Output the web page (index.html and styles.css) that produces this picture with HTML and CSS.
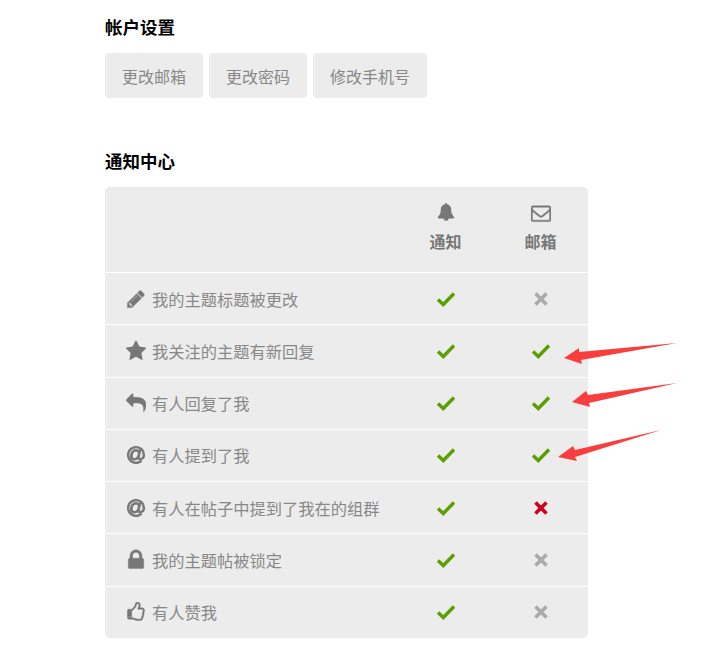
FILE: index.html
```html
<!DOCTYPE html>
<html lang="zh-CN">
<head>
    <meta charset="UTF-8">
    <title>设置</title>
    <link rel="stylesheet" href="styles.css">
</head>
<body>
<svg class="defs" xmlns="http://www.w3.org/2000/svg">
    <symbol id="i-check" viewBox="0 0 20 16"><path d="M2 8.5 7.3 13.5 18 2.5" fill="none" stroke="currentColor" stroke-width="3.4"/></symbol>
    <symbol id="i-times" viewBox="0 0 16 16"><path d="M2.5 2.5 13.5 13.5M13.5 2.5 2.5 13.5" fill="none" stroke="currentColor" stroke-width="3.6"/></symbol>
    <symbol id="i-at" viewBox="0 0 1792 1792"><path d="M1100 775q0-108-53.5-169t-147.5-61q-63 0-124 30.5t-110 84.5-79.5 137-30.5 180q0 112 53.5 173t150.5 61q96 0 176-66.5t122.5-166 42.5-203.5zm564 121q0 111-37 197t-98.5 135-131.5 74.5-145 27.5q-6 0-15.5.5t-16.5.5q-95 0-142-53-28-33-33-83-52 66-131.5 110t-173.5 44q-161 0-249.5-95.5t-88.5-269.5q0-157 66-290t179-210.5 246-77.5q87 0 155 35.5t106 99.5l2-19 11-56q1-6 5.5-12t9.5-6h118q5 0 13 11 5 5 3 16l-120 614q-5 24-5 48 0 39 12.5 52t44.5 13q28-1 57-5.5t73-24 77-50 57-89.5 24-137q0-292-174-466t-466-174q-130 0-248.5 51t-204 136.5-136.5 204-51 248.5 51 248.5 136.5 204 204 136.5 248.5 51q228 0 405-144 11-9 24-8t21 12l41 49q8 12 7 24-2 13-12 22-102 83-227.5 128t-258.5 45q-156 0-298-61t-245-164-164-245-61-298 61-298 164-245 245-164 298-61q344 0 556 212t212 556z"/></symbol>
</svg>

<div class="page">
    <h3 class="title">帐户设置</h3>
    <div class="btn-row">
        <button class="btn">更改邮箱</button>
        <button class="btn">更改密码</button>
        <button class="btn">修改手机号</button>
    </div>

    <h3 class="title title-notify">通知中心</h3>
    <div class="grid">
        <div class="row head">
            <div></div>
            <div class="col-head">
                <svg class="head-icon" viewBox="0 0 1792 1792"><path d="M912 1696q0-16-16-16-59 0-101.5-42.5t-42.5-101.5q0-16-16-16t-16 16q0 73 51.5 124.5t124.5 51.5q16 0 16-16zm816-288q0 52-38 90t-90 38h-448q0 106-75 181t-181 75-181-75-75-181h-448q-52 0-90-38t-38-90q50-42 91-88t85-119.5 74.5-158.5 50-206 19.5-260q0-152 117-282.5t307-158.5q-8-19-8-39 0-40 28-68t68-28 68 28 28 68q0 20-8 39 190 28 307 158.5t117 282.5q0 139 19.5 260t50 206 74.5 158.5 85 119.5 91 88z"/></svg>
                <span>通知</span>
            </div>
            <div class="col-head">
                <svg class="head-icon head-mail" viewBox="0 0 1792 1792"><path d="M1664 1504v-768q-32 36-69 66-268 206-426 338-51 43-83 67t-86.5 48.5-102.5 24.5h-2q-48 0-102.5-24.5t-86.5-48.5-83-67q-158-132-426-338-37-30-69-66v768q0 13 9.5 22.5t22.5 9.5h1472q13 0 22.5-9.5t9.5-22.5zm0-1051v-24.5l-.5-13-3-12.5-5.5-9-9-7.5-14-2.5h-1472q-13 0-22.5 9.5t-9.5 22.5q0 168 147 284 193 152 401 317 6 5 35 29.5t46 37.5 44.5 31.5 50.5 27.5 43 9h2q20 0 43-9t50.5-27.5 44.5-31.5 46-37.5 35-29.5q208-165 401-317 54-43 100.5-115.5t46.5-131.5zm128-37v1088q0 66-47 113t-113 47h-1472q-66 0-113-47t-47-113v-1088q0-66 47-113t113-47h1472q66 0 113 47t47 113z"/></svg>
                <span>邮箱</span>
            </div>
        </div>

        <div class="row">
            <div class="label">
                <svg class="icon icon-bold" viewBox="0 0 1792 1792"><path d="M491 1536l91-91-235-235-91 91v107h128v128h107zm523-928q0-22-22-22-10 0-17 7l-542 542q-7 7-7 17 0 22 22 22 10 0 17-7l542-542q7-7 7-17zm-54-192l416 416-832 832h-416v-416zm683 96q0 53-37 90l-166 166-416-416 166-165q36-38 90-38 53 0 91 38l235 234q37 39 37 91z"/></svg>
                我的主题标题被更改
            </div>
            <div class="cell"><svg class="check"><use href="#i-check"/></svg></div>
            <div class="cell"><svg class="cross"><use href="#i-times"/></svg></div>
        </div>
        <div class="row">
            <div class="label">
                <svg class="icon icon-big" viewBox="0 0 1792 1792"><path d="M1728 647q0 22-26 48l-363 354 86 500q1 7 1 20 0 21-10.5 35.5t-30.5 14.5q-19 0-40-12l-449-236-449 236q-22 12-40 12-21 0-31.5-14.5t-10.5-35.5q0-6 2-20l86-500-364-354q-25-27-25-48 0-37 56-46l502-73 225-455q19-41 49-41t49 41l225 455 502 73q56 9 56 46z"/></svg>
                我关注的主题有新回复
            </div>
            <div class="cell"><svg class="check"><use href="#i-check"/></svg></div>
            <div class="cell"><svg class="check"><use href="#i-check"/></svg></div>
        </div>
        <div class="row">
            <div class="label">
                <svg class="icon icon-bold" viewBox="0 0 1792 1792"><path d="M1792 1120q0 166-127 451-3 7-10.5 24t-13.5 30-13 22q-12 17-28 17-15 0-23.5-10t-8.5-25q0-9 2.5-26.5t2.5-23.5q5-68 5-123 0-101-17.5-181t-48.5-138.5-80-101-105.5-69.5-133-42.5-154-21.5-175.5-6h-224v256q0 26-19 45t-45 19-45-19l-512-512q-19-19-19-45t19-45l512-512q19-19 45-19t45 19 19 45v256h224q713 0 875 403 53 134 53 333z"/></svg>
                有人回复了我
            </div>
            <div class="cell"><svg class="check"><use href="#i-check"/></svg></div>
            <div class="cell"><svg class="check"><use href="#i-check"/></svg></div>
        </div>
        <div class="row">
            <div class="label">
                <svg class="icon icon-bold icon-at"><use href="#i-at"/></svg>
                有人提到了我
            </div>
            <div class="cell"><svg class="check"><use href="#i-check"/></svg></div>
            <div class="cell"><svg class="check"><use href="#i-check"/></svg></div>
        </div>
        <div class="row">
            <div class="label">
                <svg class="icon icon-bold icon-at"><use href="#i-at"/></svg>
                有人在帖子中提到了我在的组群
            </div>
            <div class="cell"><svg class="check"><use href="#i-check"/></svg></div>
            <div class="cell"><svg class="cross cross-on"><use href="#i-times"/></svg></div>
        </div>
        <div class="row">
            <div class="label">
                <svg class="icon icon-lock" viewBox="0 0 1792 1792"><path d="M640 768h512v-192q0-106-75-181t-181-75-181 75-75 181v192zm832 96v576q0 40-28 68t-68 28h-960q-40 0-68-28t-28-68v-576q0-40 28-68t68-28h32v-192q0-184 132-316t316-132 316 132 132 316v192h32q40 0 68 28t28 68z"/></svg>
                我的主题帖被锁定
            </div>
            <div class="cell"><svg class="check"><use href="#i-check"/></svg></div>
            <div class="cell"><svg class="cross"><use href="#i-times"/></svg></div>
        </div>
        <div class="row">
            <div class="label">
                <svg class="icon icon-bold" viewBox="0 0 1792 1792"><path d="M384 1344q0-26-19-45t-45-19-45 19-19 45 19 45 45 19 45-19 19-45zm1152-576q0-51-39-89.5t-89-38.5h-352q0-58 48-159.5t48-160.5q0-98-32-145t-128-47q-26 26-38 85t-30.5 125.5-59.5 109.5q-22 23-77 91-4 5-23 30t-31.5 41-34.5 42.5-40 44-38.5 35.5-40 27-35.5 9h-32v640h32q13 0 31.5 3t33 6.5 38 11 35 11.5 35.5 12.5 29 10.5q211 73 342 73h121q192 0 192-167 0-26-5-56 30-16 47.5-52.5t17.5-73.5-18-69q53-50 53-119 0-25-10-55.5t-25-47.5q32-1 53.5-47t21.5-81zm128-1q0 89-49 163 9 33 9 69 0 77-38 144 3 21 3 43 0 101-60 178 1 139-85 219.5t-227 80.5h-129q-96 0-189.5-22.5t-216.5-65.5q-116-40-138-40h-288q-53 0-90.5-37.5t-37.5-90.5v-640q0-53 37.5-90.5t90.5-37.5h274q36-24 137-155 58-75 107-128 24-25 35.5-85.5t30.5-126.5 62-108q39-37 90-37 84 0 151 32.5t102 101.5 35 186q0 93-48 192h176q104 0 180 76t76 179z"/></svg>
                有人赞我
            </div>
            <div class="cell"><svg class="check"><use href="#i-check"/></svg></div>
            <div class="cell"><svg class="cross"><use href="#i-times"/></svg></div>
        </div>
    </div>
</div>

<!-- red arrows drawn over the screenshot -->
<svg class="arrows" viewBox="0 0 710 653" xmlns="http://www.w3.org/2000/svg">
    <polygon points="677,343 579,352 579,348 564,358 582,364 581,360"/>
    <polygon points="677,383 588,395 586,391 572,402 590,407 589,403"/>
    <polygon points="661,430 575,450 573,446 558,457 577,461 575,457"/>
</svg>
</body>
</html>
```

FILE: styles.css
```css
html, body { margin: 0; padding: 0; background: #fff; overflow: hidden; }
body { font-family: "Liberation Sans", "Noto Sans CJK SC", sans-serif; font-size: 16px; color: #888; }
.defs { display: none; }
.page { width: 483px; margin-left: 105px; padding-top: 16px; }

.title { margin: 0; font-size: 17.5px; line-height: 24px; font-weight: bold; color: #000; }
.title-notify { margin-top: 52px; }

.btn-row { display: flex; gap: 6px; margin-top: 13px; }
.btn { height: 45px; padding: 0 17px; border: 0; border-radius: 4px; background: #ececec; color: #888; font: inherit; }

.grid { margin-top: 13px; background: #ececec; border-radius: 5px; overflow: hidden; }
.row { display: grid; grid-template-columns: 1fr 95px 95px; height: 52.25px; box-sizing: border-box; border-top: 1px solid #fff; align-items: center; }
.head { height: 85px; border-top: 0; align-items: start; padding-top: 16px; }
.col-head { display: flex; flex-direction: column; align-items: center; font-weight: bold; color: #777; line-height: 24px; }
.head-icon { width: 18px; height: 18px; fill: #777; margin-bottom: 10px; }
.head-mail { width: 20px; height: 20px; margin-bottom: 8px; stroke: #777; stroke-width: 40; }

.label { display: flex; align-items: center; gap: 6px; padding-left: 21px; color: #888; font-size: 16.25px; }
.icon { width: 20px; height: 20px; fill: #777; flex: none; }
.icon-bold { stroke: #777; stroke-width: 40; }
.icon-at { stroke-width: 90; }
.icon-big { width: 22px; height: 22px; margin: 0 -1px; }
.icon-lock { width: 24px; height: 24px; margin: -2px; stroke: #777; stroke-width: 30; }

.cell { display: flex; justify-content: center; }
.check { width: 20px; height: 16px; color: #5aa000; }
.cross { width: 16px; height: 16px; color: #aaa; }
.cross-on { color: #d0021b; }

.arrows { position: absolute; left: 0; top: 0; width: 710px; height: 653px; pointer-events: none; }
.arrows polygon { fill: #fa3e3e; }
```
